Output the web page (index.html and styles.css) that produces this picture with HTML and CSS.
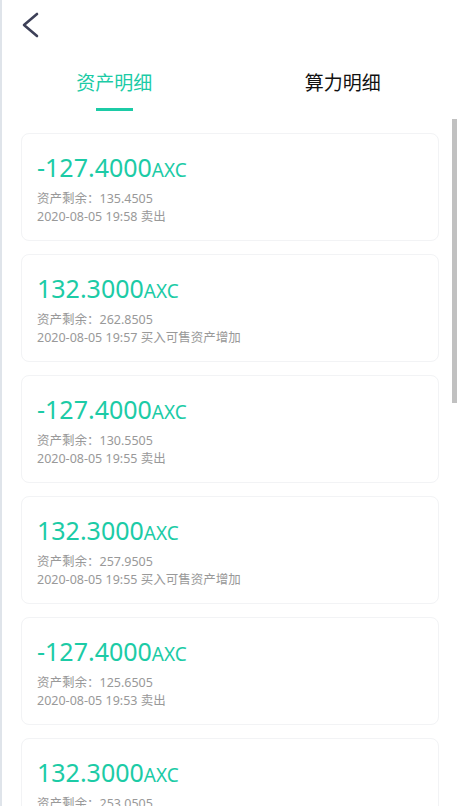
FILE: index.html
```html
<!DOCTYPE html>
<html lang="zh-CN">
<head>
  <meta charset="UTF-8">
  <meta name="viewport" content="width=device-width, initial-scale=1.0">
  <title>资产明细</title>
  <link rel="stylesheet" href="styles.css">
</head>
<body>
  <div class="page">
    <div class="top-bar">
      <a class="back" href="#">
        <svg width="18" height="26" viewBox="0 0 18 26">
          <polyline points="16,2 3,13 16,24" fill="none" stroke="#3d4058" stroke-width="2.6" stroke-linecap="round" stroke-linejoin="round"/>
        </svg>
      </a>
    </div>

    <div class="tabs">
      <div class="tab active">资产明细</div>
      <div class="tab">算力明细</div>
    </div>

    <ul class="record-list">
      <li class="record">
        <div class="amount">-127.4000<span class="unit">AXC</span></div>
        <div class="info">资产剩余：135.4505</div>
        <div class="info">2020-08-05 19:58 卖出</div>
      </li>
      <li class="record">
        <div class="amount">132.3000<span class="unit">AXC</span></div>
        <div class="info">资产剩余：262.8505</div>
        <div class="info">2020-08-05 19:57 买入可售资产增加</div>
      </li>
      <li class="record">
        <div class="amount">-127.4000<span class="unit">AXC</span></div>
        <div class="info">资产剩余：130.5505</div>
        <div class="info">2020-08-05 19:55 卖出</div>
      </li>
      <li class="record">
        <div class="amount">132.3000<span class="unit">AXC</span></div>
        <div class="info">资产剩余：257.9505</div>
        <div class="info">2020-08-05 19:55 买入可售资产增加</div>
      </li>
      <li class="record">
        <div class="amount">-127.4000<span class="unit">AXC</span></div>
        <div class="info">资产剩余：125.6505</div>
        <div class="info">2020-08-05 19:53 卖出</div>
      </li>
      <li class="record">
        <div class="amount">132.3000<span class="unit">AXC</span></div>
        <div class="info">资产剩余：253.0505</div>
        <div class="info">2020-08-05 19:52 买入可售资产增加</div>
      </li>
    </ul>

    <div class="scroll-thumb"></div>
  </div>
</body>
</html>
```

FILE: styles.css
```css
html,
body {
  margin: 0;
  height: 100%;
  overflow: hidden;
}

body {
  font-family: "Noto Sans", "Noto Sans CJK SC", sans-serif;
  background: #fff;
  color: #111;
}

.page {
  position: relative;
  height: 100%;
  border-left: 2px solid #dfe4ea;
}

.top-bar {
  height: 50px;
  display: flex;
  align-items: center;
  padding-left: 19px;
}

.back {
  display: flex;
}

.tabs {
  display: flex;
  padding-top: 20px;
  margin-left: -2px;
}

.tab {
  flex: 1;
  display: flex;
  flex-direction: column;
  align-items: center;
  font-size: 19px;
  line-height: 26px;
  color: #111;
}

.tab::after {
  content: "";
  width: 37px;
  height: 3px;
  margin-top: 12px;
  background: transparent;
}

.tab.active {
  color: #1ccba6;
}

.tab.active::after {
  background: #1ccba6;
}

.record-list {
  list-style: none;
  margin: 0;
  padding: 22px 18px 0 19px;
}

.record {
  border: 1px solid #f2f3f5;
  border-radius: 8px;
  padding: 16px 15px 14px;
  margin-bottom: 13px;
}

.amount {
  height: 34px;
  font-size: 25px;
  line-height: 34px;
  color: #1ccba6;
  margin-bottom: 6px;
}

.amount .unit {
  font-size: 19px;
  line-height: 1;
}

.info {
  font-size: 12.5px;
  line-height: 18px;
  color: #999;
}

.scroll-thumb {
  position: absolute;
  top: 119px;
  right: 0;
  width: 5px;
  height: 284px;
  background: #c1c1c1;
}
```
